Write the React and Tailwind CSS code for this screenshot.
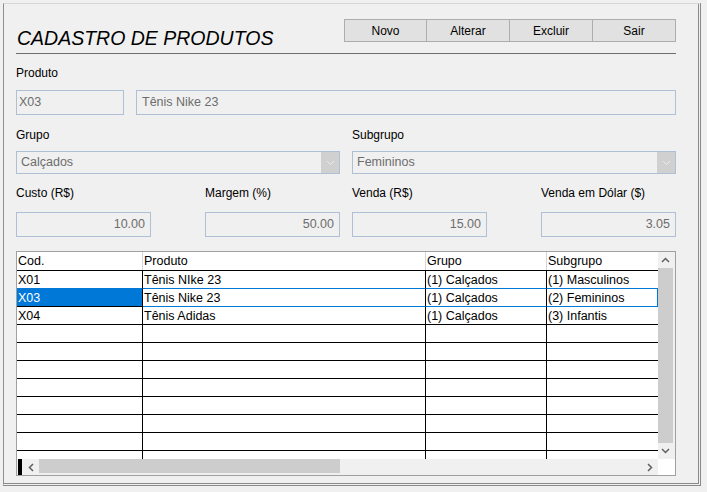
import React from 'react';

const rows = [
  { cod: 'X01', produto: 'Tênis NIke 23', grupo: '(1) Calçados', sub: '(1) Masculinos' },
  { cod: 'X03', produto: 'Tênis Nike 23', grupo: '(1) Calçados', sub: '(2) Femininos', selected: true },
  { cod: 'X04', produto: 'Tênis Adidas', grupo: '(1) Calçados', sub: '(3) Infantis' },
];

const allRows = [...rows, ...Array.from({ length: 8 }, () => ({ cod: '', produto: '', grupo: '', sub: '' }))];

function Chevron({ dir = 'down', color = '#606060', w = 1.5 }) {
  const pts = {
    up: '1,5 4.5,1.5 8,5',
    down: '1,1 4.5,4.5 8,1',
    left: '5,1 1.5,4.5 5,8',
    right: '1,1 4.5,4.5 1,8',
  }[dir];
  const horiz = dir === 'left' || dir === 'right';
  return (
    <svg width={horiz ? 6 : 9} height={horiz ? 9 : 6} viewBox={horiz ? '0 0 6 9' : '0 0 9 6'}>
      <polyline points={pts} fill="none" stroke={color} strokeWidth={w} />
    </svg>
  );
}

function Field({ children, right, className = '' }) {
  return (
    <div
      className={`h-[25px] border border-[#aebfd6] bg-[#f0f0f0] flex items-center text-[12.5px] text-[#6d6d6d] ${
        right ? 'justify-end pr-[5px]' : 'pl-[5px]'
      } ${className}`}
    >
      {children}
    </div>
  );
}

function Combo({ value }) {
  return (
    <div className="h-[23px] w-[324px] border border-[#aebfd6] flex">
      <div className="flex-1 flex items-center pl-[4px] text-[12.5px] text-[#6d6d6d]">{value}</div>
      <div className="w-[18px] bg-[#d0d0d0] flex items-center justify-center">
        <Chevron dir="down" color="#ebebeb" w={1} />
      </div>
    </div>
  );
}

export default function App() {
  return (
    <div className="w-[707px] h-[492px] bg-[#f0f0f0] pl-[3px] pt-[3px] font-['Liberation_Sans',Arial,sans-serif] text-black">
      <div className="w-[698px] h-[483px] border-double border-l border-t border-r-[3px] border-b-[3px] border-l-[#8f8f8f] border-t-[#d6d6d6] border-r-[#8a8a8a] border-b-[#8a8a8a] pl-[12px]">
        {/* Header */}
        <div className="w-[660px] h-[50px] border-b border-[#6e6e6e] flex justify-between items-start">
          <h1 className="mt-[23px] ml-[1px] text-[19.5px] leading-[22px] italic">CADASTRO DE PRODUTOS</h1>
          <div className="mt-[15px] flex text-[12px]">
            {['Novo', 'Alterar', 'Excluir', 'Sair'].map((b, i) => (
              <button
                key={b}
                className={`h-[23px] ${i === 0 ? 'w-[83px]' : 'w-[84px] -ml-px'} border border-[#adadad] bg-[#e1e1e1] flex items-center justify-center`}
              >
                {b}
              </button>
            ))}
          </div>
        </div>

        {/* Produto */}
        <div className="w-[660px] text-[12px]">
          <div className="mt-[12px] leading-[14px]">Produto</div>
          <div className="mt-[10px] flex gap-[12px]">
            <Field className="w-[108px] !pl-[2px]">X03</Field>
            <Field className="flex-1">Tênis Nike 23</Field>
          </div>

          {/* Grupo / Subgrupo */}
          <div className="mt-[13px] grid grid-cols-2 gap-x-[12px]">
            <div>
              <div className="leading-[14px]">Grupo</div>
              <div className="mt-[9px]">
                <Combo value="Calçados" />
              </div>
            </div>
            <div>
              <div className="leading-[14px]">Subgrupo</div>
              <div className="mt-[9px]">
                <Combo value="Femininos" />
              </div>
            </div>
          </div>

          {/* Valores */}
          <div className="mt-[12px] grid grid-cols-2 gap-x-[12px]">
            <div className="flex justify-between">
              <div>
                <div className="leading-[14px]">Custo (R$)</div>
                <Field right className="mt-[12px] w-[135px]">10.00</Field>
              </div>
              <div>
                <div className="leading-[14px]">Margem (%)</div>
                <Field right className="mt-[12px] w-[135px]">50.00</Field>
              </div>
            </div>
            <div className="flex justify-between">
              <div>
                <div className="leading-[14px]">Venda (R$)</div>
                <Field right className="mt-[12px] w-[135px]">15.00</Field>
              </div>
              <div>
                <div className="leading-[14px]">Venda em Dólar ($)</div>
                <Field right className="mt-[12px] w-[135px]">3.05</Field>
              </div>
            </div>
          </div>

          {/* Tabela */}
          <div className="mt-[14px] w-[660px] h-[225px] border border-[#a0a0a0] flex flex-col">
            <div className="h-[207px] flex">
              <div className="w-[641px] overflow-hidden bg-white text-[12.5px]">
                <div className="flex h-[19px] leading-[18px] border-b border-black">
                  <div className="w-[126px] pl-[1px] border-r border-[#d6d6d6]">Cod.</div>
                  <div className="w-[283px] pl-[1px] border-r border-[#d6d6d6]">Produto</div>
                  <div className="w-[121px] pl-[1px] border-r border-[#d6d6d6]">Grupo</div>
                  <div className="w-[111px] pl-[1px]">Subgrupo</div>
                </div>
                {allRows.map((r, i) => {
                  const next = allRows[i + 1];
                  const blueBottom = r.selected || (next && next.selected);
                  const line = blueBottom ? 'border-b-[#0078d7]' : 'border-b-black';
                  return (
                    <div key={i} className="flex h-[18px] leading-[18px]">
                      <div
                        className={`w-[126px] pl-[1px] border-r border-r-black border-b ${
                          r.selected ? 'bg-[#0078d7] text-white border-b-black' : line
                        }`}
                      >
                        {r.cod}
                      </div>
                      <div className={`w-[283px] pl-[1px] border-r border-r-black border-b ${line}`}>{r.produto}</div>
                      <div className={`w-[121px] pl-[1px] border-r border-r-black border-b ${line}`}>{r.grupo}</div>
                      <div
                        className={`w-[111px] pl-[1px] border-b ${line} ${
                          r.selected ? 'border-r border-r-[#0078d7]' : ''
                        }`}
                      >
                        {r.sub}
                      </div>
                    </div>
                  );
                })}
              </div>
              {/* scrollbar vertical */}
              <div className="w-[17px] bg-[#f0f0f0] flex flex-col">
                <div className="h-[16px] flex items-center justify-center pr-[2px]">
                  <Chevron dir="up" />
                </div>
                <div className="h-[175px] w-[15px] bg-[#cdcdcd]" />
                <div className="h-[16px] flex items-center justify-center pr-[2px]">
                  <Chevron dir="down" />
                </div>
              </div>
            </div>
            {/* scrollbar horizontal */}
            <div className="h-[16px] flex">
              <div className="w-[641px] bg-[#f0f0f0] flex">
                <div className="w-[1px]" />
                <div className="w-[4px] bg-black" />
                <div className="w-[17px] flex items-center justify-center">
                  <Chevron dir="left" />
                </div>
                <div className="w-[301px] h-[14px] bg-[#cdcdcd]" />
                <div className="flex-1" />
                <div className="w-[17px] flex items-center justify-center">
                  <Chevron dir="right" />
                </div>
              </div>
              <div className="w-[17px] bg-white" />
            </div>
          </div>
        </div>
      </div>
    </div>
  );
}
